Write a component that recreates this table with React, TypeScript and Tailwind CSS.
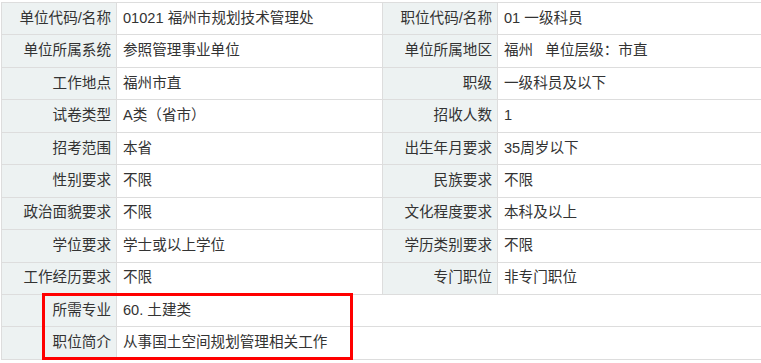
const rows: [string, string, string, string][] = [
  ['单位代码/名称', '01021 福州市规划技术管理处', '职位代码/名称', '01 一级科员'],
  ['单位所属系统', '参照管理事业单位', '单位所属地区', '福州\u00a0\u00a0\u00a0单位层级：市直'],
  ['工作地点', '福州市直', '职级', '一级科员及以下'],
  ['试卷类型', 'A类（省市）', '招收人数', '1'],
  ['招考范围', '本省', '出生年月要求', '35周岁以下'],
  ['性别要求', '不限', '民族要求', '不限'],
  ['政治面貌要求', '不限', '文化程度要求', '本科及以上'],
  ['学位要求', '学士或以上学位', '学历类别要求', '不限'],
  ['工作经历要求', '不限', '专门职位', '非专门职位'],
];

const wide: [string, string][] = [
  ['所需专业', '60. 土建类'],
  ['职位简介', '从事国土空间规划管理相关工作'],
];

const label = 'bg-[#edf2f2] border border-[#dddddd] text-right pr-[5px] whitespace-nowrap';
const value = 'bg-white border border-[#dddddd] text-left pl-[6px] whitespace-nowrap';

export default function App() {
  return (
    <div
      className="relative w-[761px] h-[363px] overflow-hidden bg-white pt-[2px] pl-[1px] text-[14.6px] text-[#333333]"
      style={{ fontFamily: '"Liberation Sans", "Noto Sans CJK SC", sans-serif' }}
    >
      <table className="border-collapse table-fixed w-[762px]">
        <colgroup>
          <col className="w-[115px]" />
          <col className="w-[266px]" />
          <col className="w-[115px]" />
          <col />
        </colgroup>
        <tbody>
          {rows.map((r) => (
            <tr key={r[0]} className="h-[32.45px]">
              <td className={label}>{r[0]}</td>
              <td className={value}>{r[1]}</td>
              <td className={label}>{r[2]}</td>
              <td className={value}>{r[3]}</td>
            </tr>
          ))}
          {wide.map((r) => (
            <tr key={r[0]} className="h-[32.45px]">
              <td className={label}>{r[0]}</td>
              <td className={value} colSpan={3}>{r[1]}</td>
            </tr>
          ))}
        </tbody>
      </table>
      {/* highlight box */}
      <div className="absolute left-[42px] top-[293px] w-[311px] h-[67px] border-[3px] border-[#ff0000] pointer-events-none" />
    </div>
  );
}
